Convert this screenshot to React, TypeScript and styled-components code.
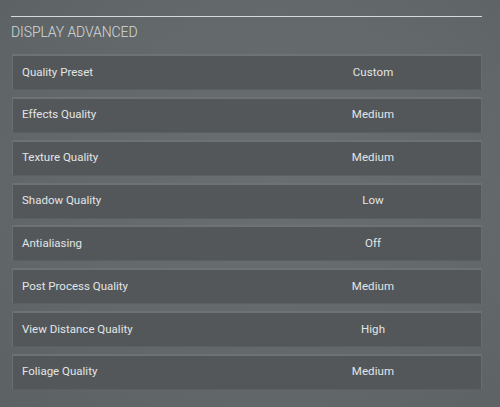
import React from 'react';
import styled, { createGlobalStyle } from 'styled-components';

const GlobalStyle = createGlobalStyle`
    html, body {
        margin: 0;
        padding: 0;
        height: 100%;
    }
    body {
        background: #62686a;
        font-family: 'Roboto', 'Liberation Sans', sans-serif;
    }
`;

const Page = styled.div`
    width: 500px;
    height: 407px;
    box-sizing: border-box;
    padding: 16px 18px 0 11px;
    background: radial-gradient(ellipse at 55% 45%, #696f71 0%, #63696b 55%, #5c6264 100%);
    overflow: hidden;
`;

const Header = styled.header`
    border-top: 1px solid #d6dadb;
    padding: 5px 0 0 0;
    height: 32px;
    box-sizing: border-box;
`;

const Title = styled.h1`
    margin: 0;
    font-family: 'Roboto', sans-serif;
    font-size: 14px;
    font-weight: 300;
    letter-spacing: -0.1px;
    color: #d5d9da;
    line-height: 20px;
`;

const SettingsList = styled.div`
    display: flex;
    flex-direction: column;
    gap: 6.85px;
    padding-left: 1px;
    margin-top: 6px;
`;

const Row = styled.div`
    display: grid;
    grid-template-columns: 252px 1fr;
    align-items: center;
    height: 36px;
    padding-bottom: 2px;
    box-sizing: border-box;
    background: #53575a;
    border-top: 2px solid #6d7274;
    border-left: 1px solid #6a6f71;
    border-right: 1px solid #686d70;
    border-bottom: 1px solid #5a5f61;
`;

const Label = styled.span`
    padding-left: 9px;
    font-size: 11.5px;
    color: #e2e5e6;
    letter-spacing: 0;
`;

const Value = styled.span`
    text-align: center;
    font-size: 11.5px;
    color: #e2e5e6;
    letter-spacing: 0.1px;
`;

const settings = [
    { label: 'Quality Preset', value: 'Custom' },
    { label: 'Effects Quality', value: 'Medium' },
    { label: 'Texture Quality', value: 'Medium' },
    { label: 'Shadow Quality', value: 'Low' },
    { label: 'Antialiasing', value: 'Off' },
    { label: 'Post Process Quality', value: 'Medium' },
    { label: 'View Distance Quality', value: 'High' },
    { label: 'Foliage Quality', value: 'Medium' },
];

function App() {
    return (
        <>
            <GlobalStyle />
            <Page>
                <Header>
                    <Title>DISPLAY ADVANCED</Title>
                </Header>
                <SettingsList>
                    {settings.map((s) => (
                        <Row key={s.label}>
                            <Label>{s.label}</Label>
                            <Value>{s.value}</Value>
                        </Row>
                    ))}
                </SettingsList>
            </Page>
        </>
    );
}

export default App;
